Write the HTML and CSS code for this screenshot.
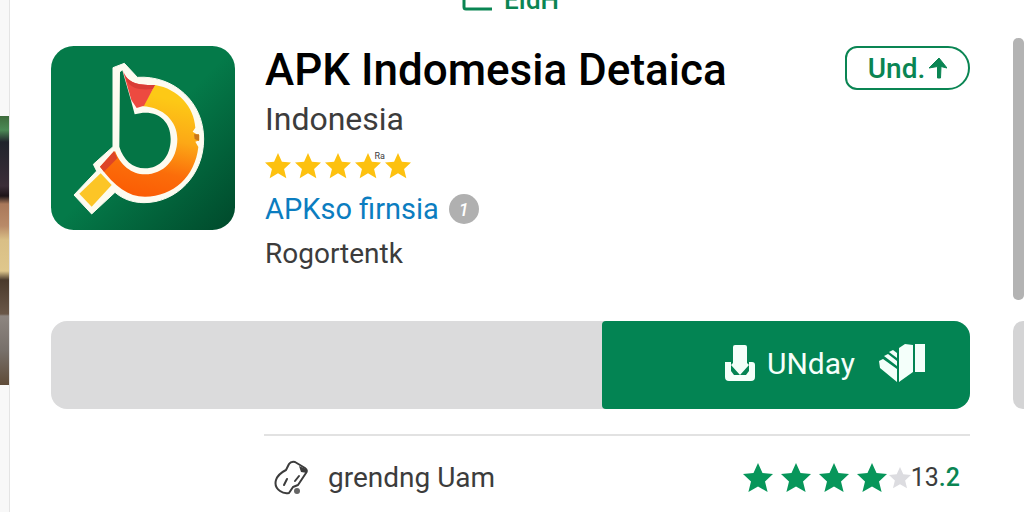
FILE: index.html
```html
<!DOCTYPE html>
<html lang="id">
<head>
  <meta charset="UTF-8" />
  <meta name="viewport" content="width=device-width, initial-scale=1" />
  <title>APK Indomesia Detaica</title>
  <link rel="stylesheet" href="styles.css">
</head>
<body>
  <svg width="0" height="0" class="defs" aria-hidden="true">
    <symbol id="star" viewBox="0 0 30 30">
      <path d="M15 0 L19.500 10 L30 11 L22 18.500 L24.600 29 L15 23.500 L5.400 29 L8 18.500 L0 11 L10.500 10Z" />
    </symbol>
  </svg>

  <div class="page">
    <aside class="preview"><div class="photo"></div></aside>

    <main class="content">
      <nav class="tabs">
        <a href="#">
          <svg class="tab-icon" viewBox="0 0 30 20"><path d="M2 0 V15 Q2 17 4 17 H30" fill="none" stroke="currentColor" stroke-width="3" /></svg>
          EIdH
        </a>
      </nav>

      <header class="app">
        <svg class="app-icon" viewBox="33 33 552 552" role="img" aria-label="APK">
          <defs>
            <linearGradient id="bg" x1="0" y1="0" x2="1" y2="1">
              <stop offset="0.500" stop-color="#047a49" />
              <stop offset="1" stop-color="#00492b" />
            </linearGradient>
            <linearGradient id="ring" x1="0.600" y1="0" x2="0.400" y2="1">
              <stop offset="0.100" stop-color="#fdc916" />
              <stop offset="0.450" stop-color="#fca816" />
              <stop offset="0.750" stop-color="#fb6d0a" />
              <stop offset="1" stop-color="#fb5c04" />
            </linearGradient>
          </defs>
          <rect x="33" y="33" width="552" height="552" rx="68" fill="url(#bg)" />
          <path d="M219 98 L253 85 L292 127 C400 120 491 200 491 312 C491 420 410 503 312 503 C278 503 248 492 225 472 L155 537 L102 480 L170 408 L160 388 L219 335Z" fill="#fdfbf0" stroke="#fdfbf0" stroke-width="3" stroke-linejoin="round" />
          <path d="M240 112 L247 106 L274 200 L284 238 C345 220 392 252 392 312 C392 365 360 400 315 400 C277 400 250 374 238 335Z" fill="#047545" />
          <path d="M345 150 C415 162 462 215 466 278 L458 290 L470 298 L478 300 V316 L466 320 L475 336 C465 425 400 485 315 485 C265 485 225 455 180 395 L225 348 C240 390 275 418 315 418 C370 418 412 375 412 312 C412 260 370 216 308 214Z" fill="url(#ring)" />
          <path d="M462 298 H477 V318 L464 312Z" fill="#c8761c" />
          <path d="M180 395 L222 348 L232 370 L192 410Z" fill="#dd4526" />
          <path d="M249 108 C262 140 285 152 345 150 L312 212 L290 219 L274 195Z" fill="#ed4a40" />
          <path d="M249 108 C262 140 285 152 345 150 L338 162 C300 166 275 160 262 140Z" fill="#d93d35" />
          <path d="M182 415 L215 450 L155 515 L118 476Z" fill="#fcc526" />
        </svg>

        <div class="info">
          <h1>APK Indomesia Detaica</h1>
          <p class="country">Indonesia</p>
          <div class="rating" role="img" aria-label="5">
            <svg><use href="#star" /></svg>
            <svg><use href="#star" /></svg>
            <svg><use href="#star" /></svg>
            <svg><use href="#star" /></svg>
            <svg><use href="#star" /></svg>
            <span class="mark">Ra</span>
          </div>
          <div class="developer">
            <a href="#">APKso firnsia</a>
            <button class="info-button" type="button">1</button>
          </div>
          <p class="category">Rogortentk</p>
        </div>

        <button class="update" type="button">
          Und.
          <svg viewBox="0 0 18 22"><path d="M10 1 L18 11 L12 9.500 L11.500 21 H8.500 L8.500 9.500 L0 11Z" fill="currentColor" stroke="currentColor" /></svg>
        </button>
      </header>

      <div class="install-bar">
        <button class="install" type="button">
          <svg class="download" viewBox="0 0 30 38">
            <path d="M0 18 H6 V27 L9 31 H21 L24 27 V18 H27 Q30 18 30 21 V33 Q30 37 26 37 H4 Q0 37 0 33Z" fill="currentColor" />
            <path d="M10 1 H20 Q22 1 22 3 V19 L24 21 L15 31 L6 21 L8 19 V3 Q8 1 10 1Z" fill="currentColor" />
          </svg>
          <span>UNday</span>
          <svg class="cards" viewBox="0 0 46 40">
            <path d="M20 5 L26 1 L34 2 V29 L20 39Z M36 1 H46 V29 H36Z" fill="currentColor" />
            <path d="M0 18 L4 16 L18 26 V39 L1 25Z M5 13 L9 11 L18 18 V23Z M10 9 L14 7 L18 10 V15Z" fill="currentColor" />
          </svg>
        </button>
      </div>

      <section class="review">
        <svg class="tag" viewBox="-1 -1 34 36" fill="none" stroke="#3c3c3c" stroke-width="2" stroke-linejoin="round" stroke-linecap="round">
          <path d="M1 19 Q3 13 11 9 L14 3 Q16 0 20 1 L30 7 Q33 9 31 12 L23 24 L18 26 L14 32 Q9 33 5 30 Q-1 26 1 19Z" />
          <path d="M24 5 L31 8 L32 12 L26 11Z" fill="#3c3c3c" stroke="none" />
          <path d="M9 24 L12 18 M20 20 L24 15" />
          <circle cx="22" cy="30" r="3" fill="#666" stroke="none" />
        </svg>
        <span class="name">grendng Uam</span>
        <div class="score">
          <svg><use href="#star" /></svg>
          <svg><use href="#star" /></svg>
          <svg><use href="#star" /></svg>
          <svg><use href="#star" /></svg>
          <svg class="empty"><use href="#star" /></svg>
          <span>13<b>.2</b></span>
        </div>
      </section>
    </main>

    <aside class="rail">
      <div class="thumb"></div>
      <div class="next"></div>
    </aside>
  </div>
</body>
</html>
```
FILE: styles.css
```css
* {
  box-sizing: border-box;
}

body {
  margin: 0;
  font-family: Roboto, "Liberation Sans", sans-serif;
  background: #fff;
  color: #3c3c3c;
}

h1, p {
  margin: 0;
}

a {
  color: inherit;
  text-decoration: none;
}

button {
  font-family: inherit;
  border: none;
  cursor: pointer;
}

.defs {
  position: absolute;
}

.page {
  display: grid;
  grid-template-columns: 9px 1fr 11px;
  min-height: 100vh;
  overflow: hidden;
}

/* left screenshot strip */
.preview {
  padding-top: 116px;
  background: #f8f8f8;
}

.photo {
  height: 269px;
  background: linear-gradient(#3e6b3c 0, #4b8a55 14px, #20242c 26px, #3b2d38 70px, #1d1418 80px, #a9785a 88px, #b98a68 110px, #d9bf86 124px, #dfc78c 155px, #4a3a2c 164px, #6a5748 198px, #8d8580 200px, #77706a 235px, #5f4b38 269px);
}

.content {
  padding: 0 43px 16px 41px;
  border-left: 1px solid #e4e4e4;
}

/* tabs scrolled under the top edge */
.tabs {
  display: flex;
  justify-content: center;
  height: 46px;
  margin-top: -20px;
  margin-bottom: 20px;
  font-size: 26px;
  font-weight: 500;
  line-height: 40px;
  color: #0a8553;
}

.tabs a {
  display: flex;
  gap: 12px;
}

.tab-icon {
  width: 30px;
  height: 20px;
  margin-top: 12px;
}

.app {
  display: flex;
  align-items: flex-start;
}

.app-icon {
  flex: none;
  width: 184px;
  height: 184px;
  margin-right: 30px;
}

.info {
  flex: 1;
}

h1 {
  font-size: 44px;
  font-weight: 500;
  line-height: 48px;
  color: #000;
  white-space: nowrap;
}

.country {
  font-size: 32px;
  line-height: 50px;
}

.rating {
  position: relative;
  display: flex;
  align-items: center;
  gap: 4px;
  width: max-content;
  height: 44px;
  fill: #fdc10f;
}

.rating svg {
  width: 26px;
  height: 26px;
}

.mark {
  position: absolute;
  top: 6px;
  right: 26px;
  font-size: 9px;
  line-height: 12px;
}

.developer {
  display: flex;
  align-items: center;
  gap: 10px;
  height: 42px;
  font-size: 29px;
  color: #0b7dc0;
}

.info-button {
  width: 30px;
  height: 30px;
  padding: 0;
  border-radius: 50%;
  background: #b0b0b0;
  color: #fff;
  font-size: 18px;
  font-style: italic;
  font-weight: 500;
}

.category {
  font-size: 28px;
  line-height: 48px;
}

.update {
  display: flex;
  align-items: center;
  justify-content: center;
  gap: 4px;
  width: 125px;
  height: 44px;
  padding: 0;
  border: 2px solid #0a8553;
  border-radius: 12px 22px 22px 12px;
  background: #fff;
  color: #0a8553;
  font-size: 28px;
  font-weight: 500;
}

.update svg {
  width: 18px;
  height: 22px;
}

.install-bar {
  display: flex;
  justify-content: flex-end;
  margin-top: 43px;
  border-radius: 16px;
  background: #dbdbdc;
}

.install {
  display: flex;
  align-items: center;
  justify-content: flex-end;
  width: 40%;
  height: 88px;
  padding: 0 45px 4px 0;
  border-radius: 4px 16px 16px 4px;
  background: #038453;
  color: #f4fffa;
  font-size: 30px;
}

.download {
  width: 30px;
  height: 38px;
  margin-right: 12px;
}

.cards {
  width: 46px;
  height: 40px;
  margin-left: 24px;
}

.review {
  display: flex;
  align-items: center;
  margin: 25px 0 0 213px;
  padding: 24px 10px 0 10px;
  border-top: 2px solid #e2e2e2;
  font-size: 28px;
  line-height: 34px;
}

.tag {
  width: 34px;
  height: 36px;
  margin-right: 20px;
}

.score {
  display: flex;
  align-items: center;
  gap: 8px;
  margin-left: auto;
  font-size: 25px;
  fill: #07965a;
}

.score svg {
  width: 30px;
  height: 30px;
}

.score .empty {
  width: 22px;
  height: 24px;
  margin: 0 -8px 0 -6px;
  fill: #dcdce0;
}

.score b {
  font-weight: 500;
  color: #0a8553;
}

/* right scrollbar and next card */
.rail {
  padding-top: 38px;
}

.thumb {
  height: 262px;
  border-radius: 5px;
  background: #b3b3b3;
}

.next {
  height: 88px;
  margin-top: 21px;
  border-radius: 10px 0 0 10px;
  background: #d4d4d5;
}
```
